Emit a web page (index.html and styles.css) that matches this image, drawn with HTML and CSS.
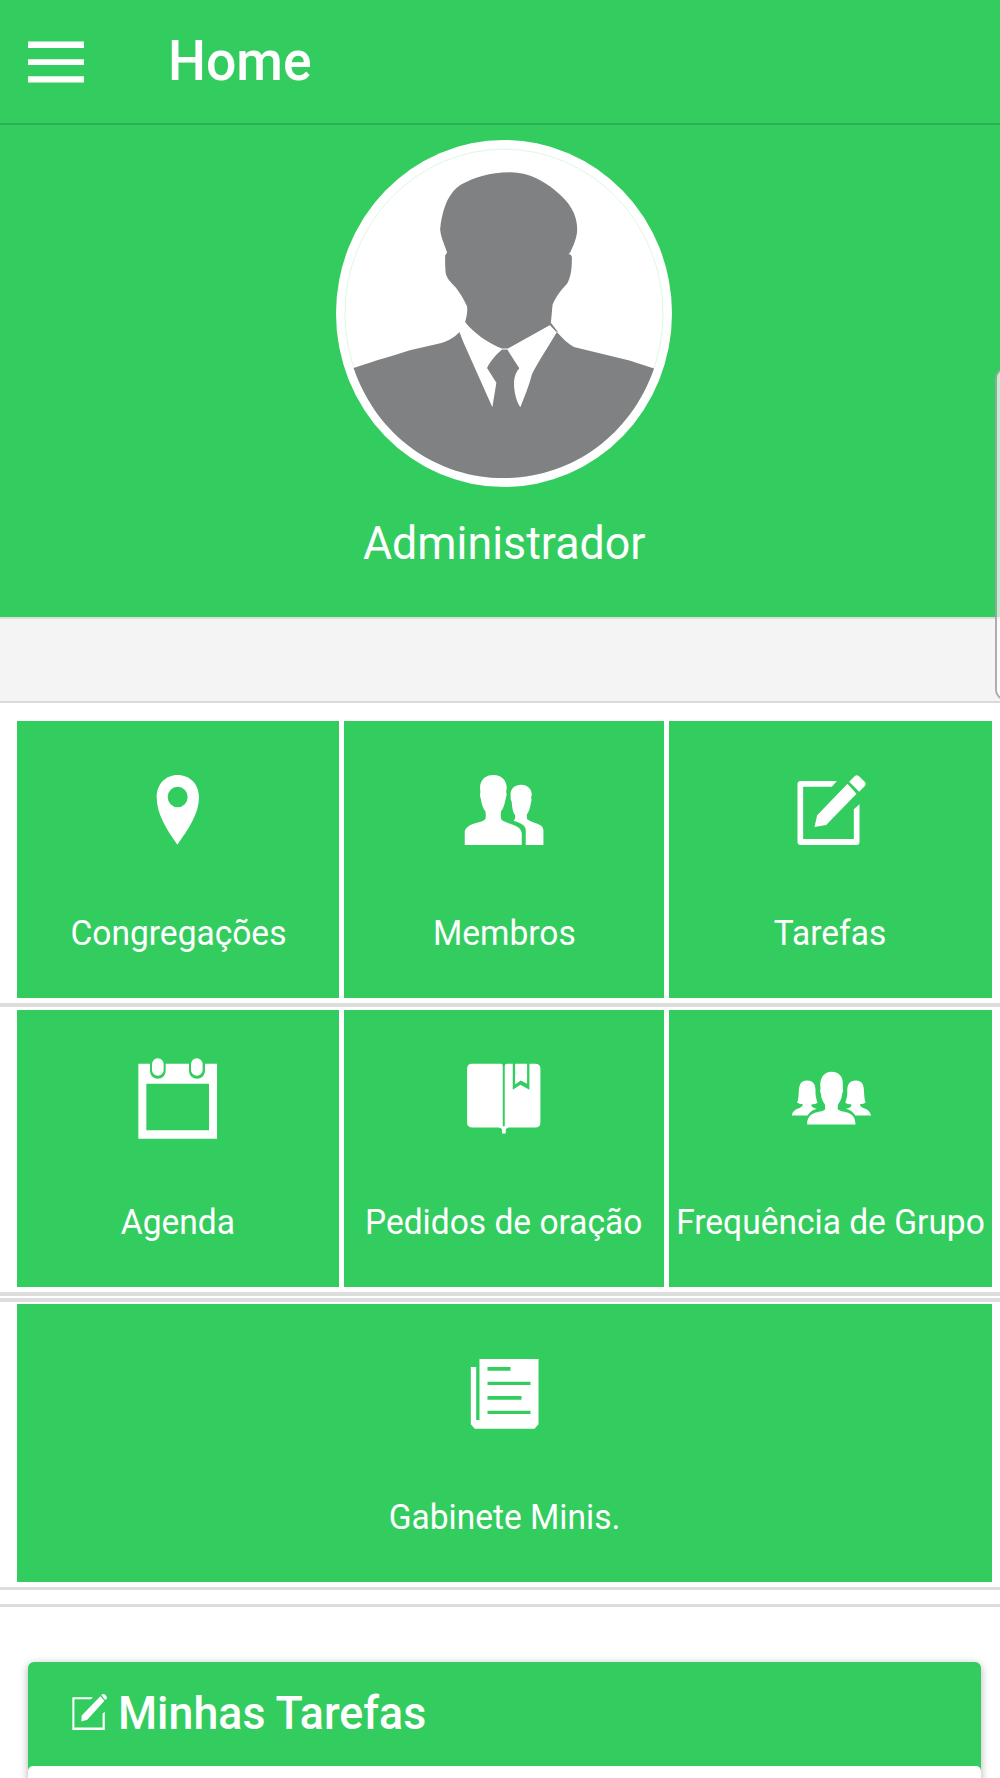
FILE: index.html
```html
<!DOCTYPE html>
<html lang="pt-BR">
<head>
<meta charset="utf-8">
<title>Home</title>
<link rel="stylesheet" href="styles.css">
</head>
<body>
<header class="bar">
  <svg class="menu" viewBox="84 122 168 126" aria-label="Menu"><path d="M84 123.500h168v19.500H84zM84 176.500h168V194H84zM84 227.500h168v19H84z"/></svg>
  <h1 class="bar-title">Home</h1>
</header>
<section class="profile">
  <svg class="avatar" viewBox="48 57 1010 1043">
    <ellipse cx="553" cy="578.500" rx="505" ry="521.500" fill="#fff"/>
    <ellipse cx="553" cy="578.500" rx="478" ry="494" fill="none" stroke="#d3f5dc" stroke-width="2.500"/>
    <g fill="#808183">
      <path d="M570 154C625 153 672 180 705 207C750 242 773 280 773 325C773 350 762 373 752 395L747 400C755 402 758 405 757 416C757 440 755 468 742 490C729 503 708 528 699 552C697 570 696 590 693 612L565 684L558 684L546 684C505 667 460 636 436 604C440 590 444 574 442 557C430 530 417 512 408 500C397 488 384 477 379 462C376 447 376 430 376 404L382 395C374 372 364 352 361 326C363 300 368 275 379 247C391 222 404 204 424 191C465 169 510 154 570 154Z"/>
      <path d="M101 742C170 719 220 705 270 689L365 667C390 659 405 649 419 634L431 665L518 860L530 787L502 742C515 717 530 702 547 687H563L599 743C590 753 584 767 583 785C583 815 590 842 602 860C616 825 628 797 637 761C657 722 686 678 712 634C730 655 746 670 763 679L930 720L1004 744C932 950 752 1073 553 1073C354 1073 172 950 101 742Z"/>
      <path d="M694 606L716 635L708 632L690 612Z"/>
    </g>
  </svg>
  <p class="name">Administrador</p>
</section>
<div class="divider"></div>
<main>
  <nav class="tiles first">
    <a class="tile"><svg class="icon" viewBox="399 495 270 270"><path fill-rule="evenodd" d="M533 525C570 525 597 553 597 592C597 643 563 690 532 734C501 690 470 643 470 592C470 553 496 525 533 525ZM533 560A30 31 0 1 0 533 622A30 31 0 1 0 533 560Z"/></svg><span class="label">Congregações</span></a>
    <a class="tile"><svg class="icon" viewBox="387.750 195 270 270"><path d="M491 225C517 225 530 242 531 263L529 277Q532 280 530 287L527 300C524 316 519 328 514 334C512 345 513 354 516 360C530 369 548 372 558 378C570 383 575 392 576 400V435H405V394C408 383 417 377 429 372C442 367 460 366 467 357C469 349 468 340 467 334C460 327 455 309 454 300Q449 286 452 276C446 243 464 225 491 225Z"/><path d="M574 254C594 254 606 267 606 284L604 294Q607 299 604 306C601 325 597 337 591 344L592 358C606 368 622 369 634 377C639 381 641 386 641 393V435H588V388C586 377 578 371 551 362Q558 358 556 345C550 339 547 324 546 306Q540 298 543 290C539 269 552 254 574 254Z"/></svg><span class="label">Membros</span></a>
    <a class="tile"><svg class="icon" viewBox="376.500 195 270 270"><path d="M421 243H529L514 260H428V417H580V328L597 313V426Q597 435 588 435H421Q411 435 411 426V252Q411 243 421 243Z"/><path d="M561 251L588 281L497 375L462 381L470 346ZM566 245L583 228Q589 223 595 228L611 244Q619 251 613 258L596 275Z"/></svg><span class="label">Tarefas</span></a>
  </nav>
  <nav class="tiles second">
    <a class="tile"><svg class="icon" viewBox="399 163.500 270 270"><path fill-rule="evenodd" d="M415 193H450V212C450 246 497 246 497 212V193H567V212C567 246 615 246 615 212V193H651V418H415ZM439 253V392H627V253Z"/><rect x="456" y="176" width="35" height="53" rx="17.500"/><rect x="573" y="176" width="35" height="53" rx="17.500"/></svg><span class="label">Agenda</span></a>
    <a class="tile"><svg class="icon" viewBox="387.750 163.500 270 270"><path d="M427 193H514Q519 193 519 199V380H525V199Q525 193 532 193H549V271L572 256L599 271V193H616Q632 193 632 208V368Q632 384 616 384H537Q528 386 528 391V402H517V391Q516 385 505 384H429Q412 384 412 368V208Q412 193 427 193Z"/><path d="M556 193H592V253L573 243L556 255Z"/></svg><span class="label">Pedidos de oração</span></a>
    <a class="tile"><svg class="icon" viewBox="376.500 163.500 270 270"><path d="M513 217C534 217 547 231 547 251V267Q550 274 545 282C544 298 538 307 533 314C531 322 531 327 533 331C548 341 585 333 585 375H440C440 333 480 341 493 331Q495 323 493 314C487 307 482 297 481 282Q477 274 480 267C476 237 490 217 513 217Z"/><path id="side-person" d="M439 243C463 243 466 260 465 282C466 295 469 302 471 310Q462 316 453 314Q450 323 469 328Q450 333 441 348H394C399 322 426 330 427 314Q416 314 410 309C417 292 412 270 419 254Q425 243 439 243Z"/><use href="#side-person" transform="matrix(-1 0 0 1 1025.500 0)"/></svg><span class="label">Frequência de Grupo</span></a>
  </nav>
  <nav class="tiles third">
    <a class="tile"><svg class="icon" viewBox="388.500 177 270 270"><path fill-rule="evenodd" d="M447 207H624V403L612 416H433L421 403V231H437V390H447ZM471 231V242H540V231ZM471 275V285H600V275ZM471 318V329H573V318ZM471 362V372H600V362Z"/></svg><span class="label">Gabinete Minis.</span></a>
  </nav>
  <div class="separator"></div>
  <section class="card">
    <h2 class="card-title">
      <svg class="card-icon" viewBox="410 223 206 212"><path d="M412 242H533L522 254H424V421H590V339L603 326V435H412Z"/><path d="M577 236L601 263L500 375L465 385L467 350ZM582 229Q596 217 608 230Q621 243 612 253L606 258Z"/></svg>
      <span class="card-text">Minhas Tarefas</span>
    </h2>
    <div class="card-body"></div>
  </section>
</main>
<div class="edge-handle"></div>
</body>
</html>
```
FILE: styles.css
```css
* { box-sizing: border-box; }
body {
  margin: 0;
  height: 1778px;
  position: relative;
  overflow: hidden;
  background: #fff;
  color: #fff;
  font-family: Roboto, "Liberation Sans", sans-serif;
}
svg { display: block; fill: #fff; }
h1, h2, p { margin: 0; white-space: nowrap; }
.bar {
  display: flex;
  align-items: flex-start;
  height: 125px;
  padding: 41px 28px 0;
  background: #33cd5f;
  border-bottom: 2px solid #2bae51;
}
.menu { width: 56px; height: 42px; }
.bar-title {
  margin: -11px 0 0 84px;
  font-size: 53px;
  line-height: 62px;
  font-weight: 500;
  transform: scale(1.01, 1.03);
  transform-origin: left center;
}
.profile {
  display: flex;
  flex-direction: column;
  align-items: center;
  height: 492px;
  padding: 14.500px 0 0 8px;
  background: #33cd5f;
}
.avatar { width: 336px; height: 347px; }
.name {
  margin-top: 29.500px;
  font-size: 46px;
  line-height: 54px;
  transform: scaleX(.973);
}
.divider {
  height: 86px;
  background: #f4f4f4;
  border-top: 2px solid #ddd;
  border-bottom: 2px solid #dadada;
}
.tiles {
  display: grid;
  grid-template-columns: 322px 320px 323px;
  column-gap: 5px;
  padding: 0 8px 5px 17px;
  border-bottom: 4px solid #ddd;
}
.first { padding-top: 18px; }
.second { padding-top: 3px; }
.third {
  grid-template-columns: 975px;
  margin-top: 2px;
  padding-top: 2px;
  border-top: 4px solid #ddd;
  border-bottom-width: 3px;
}
.tile {
  display: flex;
  flex-direction: column;
  align-items: center;
  height: 277px;
  padding-top: 44px;
  background: #33cd5f;
  white-space: nowrap;
}
.third .tile { height: 278px; padding-top: 45px; }
.icon { width: 90px; height: 90px; }
.label {
  margin-top: 57.500px;
  font-size: 34px;
  line-height: 40px;
  transform: scale(.986, 1.04);
}
.separator {
  height: 3px;
  margin-top: 14px;
  background: #ddd;
}
.card {
  margin: 55px 19px 0 28px;
  border-radius: 6px;
  background: #33cd5f;
  box-shadow: 0 2px 8px rgba(0, 0, 0, .3);
}
.card-title {
  display: flex;
  align-items: flex-start;
  height: 104px;
  padding: 32px 0 0 44px;
  font-size: 45px;
  line-height: 54px;
  font-weight: 500;
}
.card-icon { width: 35px; height: 36px; }
.card-text {
  margin: -7px 0 0 11px;
  transform: scale(.994, 1.02);
  transform-origin: left center;
}
.card-body { height: 60px; border-radius: 5px 5px 0 0; background: #fff; }
.edge-handle {
  position: absolute;
  left: 995px;
  top: 368px;
  width: 20px;
  height: 332px;
  border: 2px solid rgba(110, 110, 110, .55);
  border-radius: 12px;
  background: rgba(255, 255, 255, .7);
}
```
